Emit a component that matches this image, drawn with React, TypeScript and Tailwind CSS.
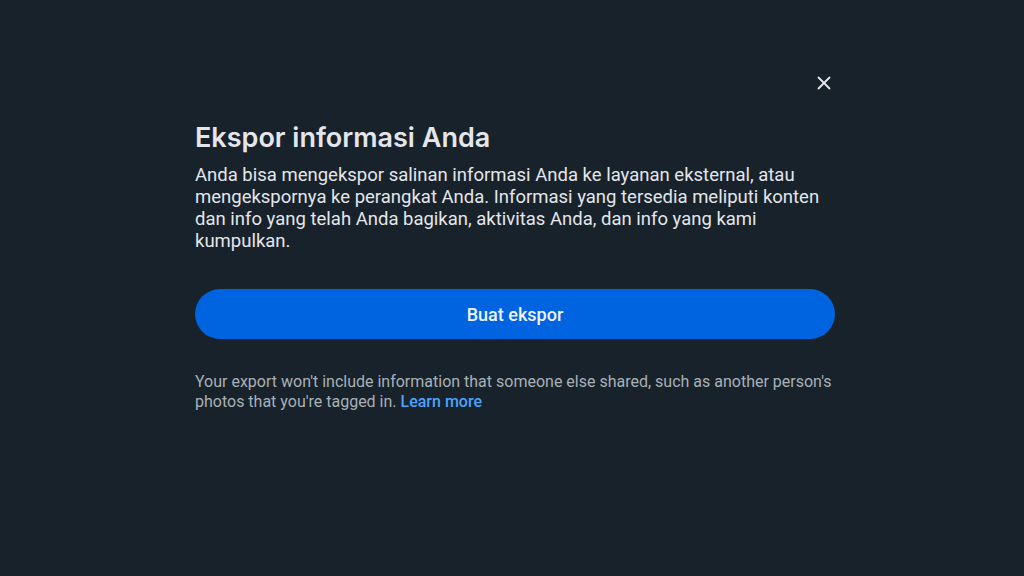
import { X } from 'lucide-react';

export default function App() {
  return (
    <div className="w-[1024px] h-[576px] bg-[#18222a] overflow-hidden" style={{ fontFamily: 'Roboto, "Noto Sans", sans-serif' }}>
      <div className="flex justify-end pt-[72px] pr-[189px] h-[122px]">
        <button className="w-[22px] h-[22px] flex items-center justify-center text-[#e4e6eb]">
          <X size={22} strokeWidth={2} />
        </button>
      </div>
      <div className="w-[642px] ml-[195px] flex flex-col">
        <h1
          className="text-[27px] leading-[32px] font-semibold text-[#e4e6eb]"
          style={{ fontFamily: 'Inter, "Noto Sans", sans-serif' }}
        >
          Ekspor informasi Anda
        </h1>
        <p className="mt-[10px] text-[18.5px] leading-[22px] text-[#e4e6eb]">
          Anda bisa mengekspor salinan informasi Anda ke layanan eksternal, atau mengekspornya ke perangkat Anda. Informasi yang tersedia meliputi konten dan info yang telah Anda bagikan, aktivitas Anda, dan info yang kami kumpulkan.
        </p>
        <button className="mt-[37px] h-[50px] w-[640px] rounded-full bg-[#0064e0] text-[#f0f2f5] text-[18px] font-medium">
          Buat ekspor
        </button>
        <p className="mt-[33px] text-[16px] leading-[20px] text-[#a8b0b8]">
          Your export won't include information that someone else shared, such as another person's photos that you're tagged in.{' '}
          <span className="text-[#4ca3ff] font-medium">Learn more</span>
        </p>
      </div>
    </div>
  );
}
